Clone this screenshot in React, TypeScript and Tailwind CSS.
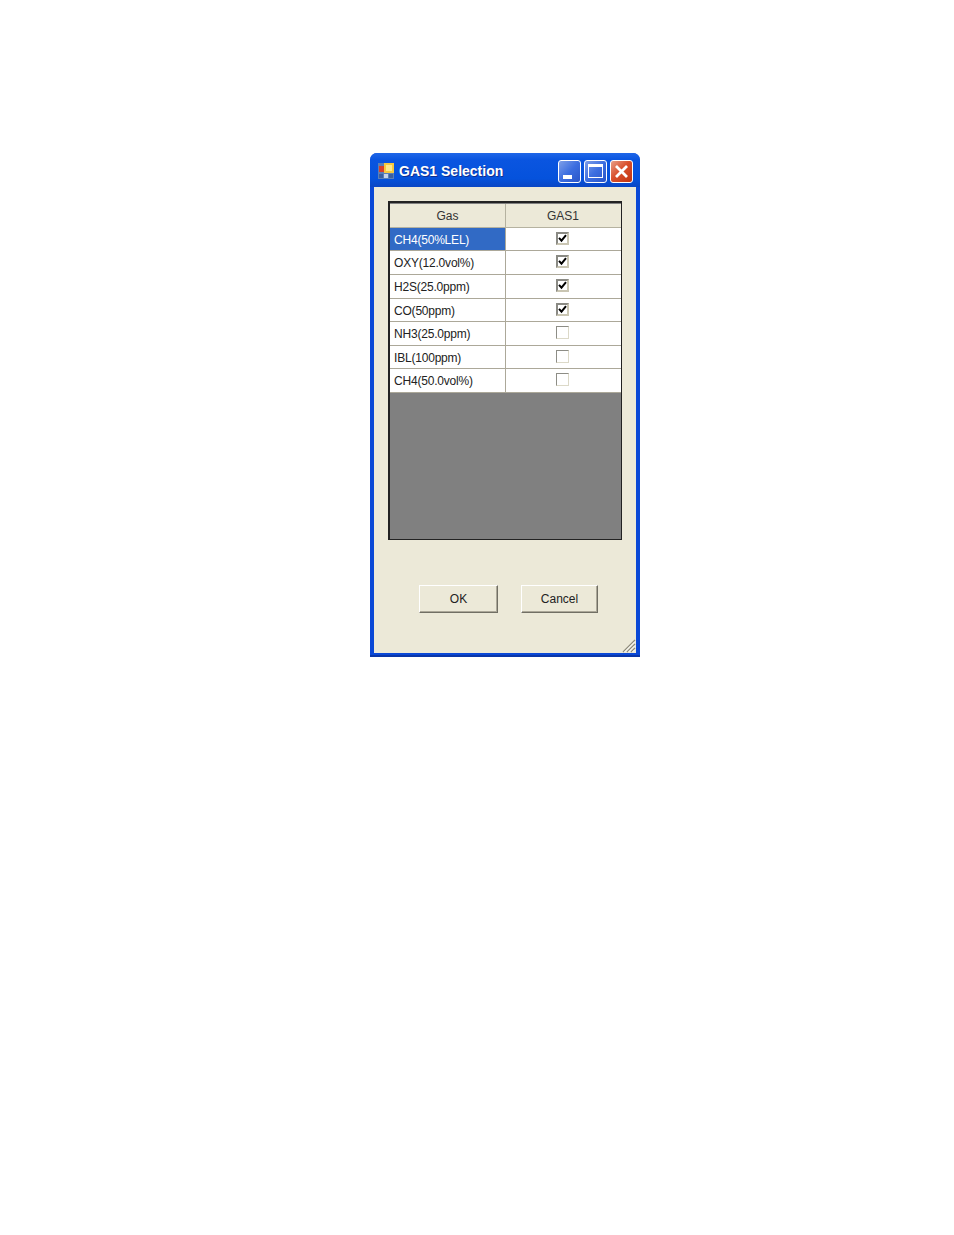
const FONT = "font-['Liberation_Sans',Arial,sans-serif]";

const rows = [
  { name: 'CH4(50%LEL)', checked: true, h: 'h-[23px]', nudge: 'pt-[1px]' },
  { name: 'OXY(12.0vol%)', checked: true, h: 'h-[24px]', nudge: '' },
  { name: 'H2S(25.0ppm)', checked: true, h: 'h-[24px]', nudge: '' },
  { name: 'CO(50ppm)', checked: true, h: 'h-[23px]', nudge: 'pt-[1px]' },
  { name: 'NH3(25.0ppm)', checked: false, h: 'h-[24px]', nudge: '' },
  { name: 'IBL(100ppm)', checked: false, h: 'h-[23px]', nudge: 'pt-[1px]' },
  { name: 'CH4(50.0vol%)', checked: false, h: 'h-[24px]', nudge: '' },
];

function AppIcon() {
  return (
    <svg width="16" height="16" viewBox="0 0 16 16" className="shrink-0">
      <rect x="0" y="0" width="16" height="16" fill="#5a7fb8" />
      <rect x="1" y="3" width="5" height="6" fill="#d8402a" />
      <rect x="6" y="0" width="10" height="10" fill="#f7c93e" />
      <rect x="8" y="2" width="6" height="6" fill="#fde98a" />
      <rect x="1" y="11" width="4" height="4" fill="#3b5fa0" />
      <rect x="6" y="11" width="4" height="4" fill="#c6d4ea" />
      <rect x="11" y="11" width="4" height="4" fill="#3b5fa0" />
    </svg>
  );
}

function CaptionButton({ kind }: { kind: 'min' | 'max' | 'close' }) {
  const bg =
    kind === 'close'
      ? 'bg-[linear-gradient(135deg,#e8a08a,#d9502c_45%,#c23410)]'
      : 'bg-[linear-gradient(135deg,#7f9fe8,#3c6ee0_50%,#2a55c8)]';
  return (
    <div className={`w-[23px] h-[23px] rounded-[3px] border border-white flex items-center justify-center ${bg}`}>
      {kind === 'min' && <div className="w-[9px] h-[4px] bg-white mt-[11px] mr-[5px]" />}
      {kind === 'max' && <div className="w-[15px] h-[14px] border border-white border-t-[3px]" />}
      {kind === 'close' && (
        <svg width="15" height="15" viewBox="0 0 15 15">
          <path d="M2 2 L13 13 M13 2 L2 13" stroke="#fff" strokeWidth="2.8" />
        </svg>
      )}
    </div>
  );
}

function Check({ checked }: { checked: boolean }) {
  return (
    <div
      className={`w-[13px] h-[13px] bg-white -mt-[2px] mr-[2px] ${
        checked
          ? 'border-2 border-t-[#8a8a84] border-l-[#8a8a84] border-r-[#c9c5b2] border-b-[#c9c5b2]'
          : 'border border-t-[#8d8d86] border-l-[#8d8d86] border-r-[#dcd9c8] border-b-[#dcd9c8]'
      }`}
    >
      {checked && (
        <svg width="9" height="9" viewBox="0 0 9 9" className="block">
          <path d="M1 3.8 L3.5 6.6 L8 1.2" fill="none" stroke="#000" strokeWidth="2" />
        </svg>
      )}
    </div>
  );
}

function Button({ label, w }: { label: string; w: string }) {
  return (
    <div
      className={`${w} h-[28px] flex items-center justify-center bg-[#ece9d8] border border-t-white border-l-white border-r-[#716f64] border-b-[#716f64] shadow-[inset_-1px_-1px_0_#aca899] text-[12px] text-[#222]`}
    >
      {label}
    </div>
  );
}

export default function App() {
  return (
    <div className={`min-h-[1235px] bg-white pt-[153px] pl-[370px] ${FONT}`}>
      <div className="w-[270px] h-[504px] rounded-t-[7px] bg-[#0a48d6] shadow-[inset_0_-2px_0_#0a36a8] flex flex-col overflow-hidden">
        {/* Title bar */}
        <div className="h-[34px] shrink-0 flex items-center pt-[2px] pl-[8px] pr-[7px] bg-[linear-gradient(180deg,#1f66e8,#0a55e0_20%,#0552dc_75%,#0a46c4)]">
          <AppIcon />
          <span className="ml-[5px] text-[14px] font-bold text-white whitespace-nowrap [text-shadow:1px_1px_0_#0f2f90]">
            GAS1 Selection
          </span>
          <div className="ml-auto flex gap-[3px]">
            <CaptionButton kind="min" />
            <CaptionButton kind="max" />
            <CaptionButton kind="close" />
          </div>
        </div>

        {/* Client area */}
        <div className="relative flex-1 mx-[4px] mb-[4px] bg-[#ece9d8] pt-[14px] px-[14px]">
          <div className="w-[234px] h-[339px] border border-t-[2px] border-l-[2px] border-[#222] bg-[#808080] flex flex-col">
            <div className="h-[24px] mt-[1px] shrink-0 flex bg-[#ece9d8] text-[12px] text-[#333] border-b border-[#b5b2a0]">
              <div className="w-[116px] flex items-center justify-center border-r border-[#b5b2a0]">Gas</div>
              <div className="w-[114px] flex items-center justify-center">GAS1</div>
            </div>
            {rows.map((r, i) => (
              <div key={r.name} className={`${r.h} shrink-0 flex bg-white text-[12px] border-b border-[#aca899] text-[#222]`}>
                <div
                  className={`w-[116px] flex items-center pl-[4px] ${r.nudge} border-r border-[#aca899] whitespace-nowrap tracking-[-0.2px] ${
                    i === 0 ? 'bg-[#316ac5] text-white' : ''
                  }`}
                >
                  {r.name}
                </div>
                <div className="w-[114px] flex items-center justify-center">
                  <Check checked={r.checked} />
                </div>
              </div>
            ))}
          </div>

          <div className="flex mt-[45px] ml-[31px] gap-[23px]">
            <Button label="OK" w="w-[79px]" />
            <Button label="Cancel" w="w-[77px]" />
          </div>

          {/* Resize grip */}
          <svg width="16" height="16" viewBox="0 0 16 16" className="absolute right-0 bottom-0">
            <path d="M15 3 L3 15 M15 7 L7 15 M15 11 L11 15" stroke="#8f8c7c" strokeWidth="1.3" />
            <path d="M15 4.5 L4.5 15 M15 8.5 L8.5 15 M15 12.5 L12.5 15" stroke="#fff" strokeWidth="1" />
          </svg>
        </div>
      </div>
    </div>
  );
}
